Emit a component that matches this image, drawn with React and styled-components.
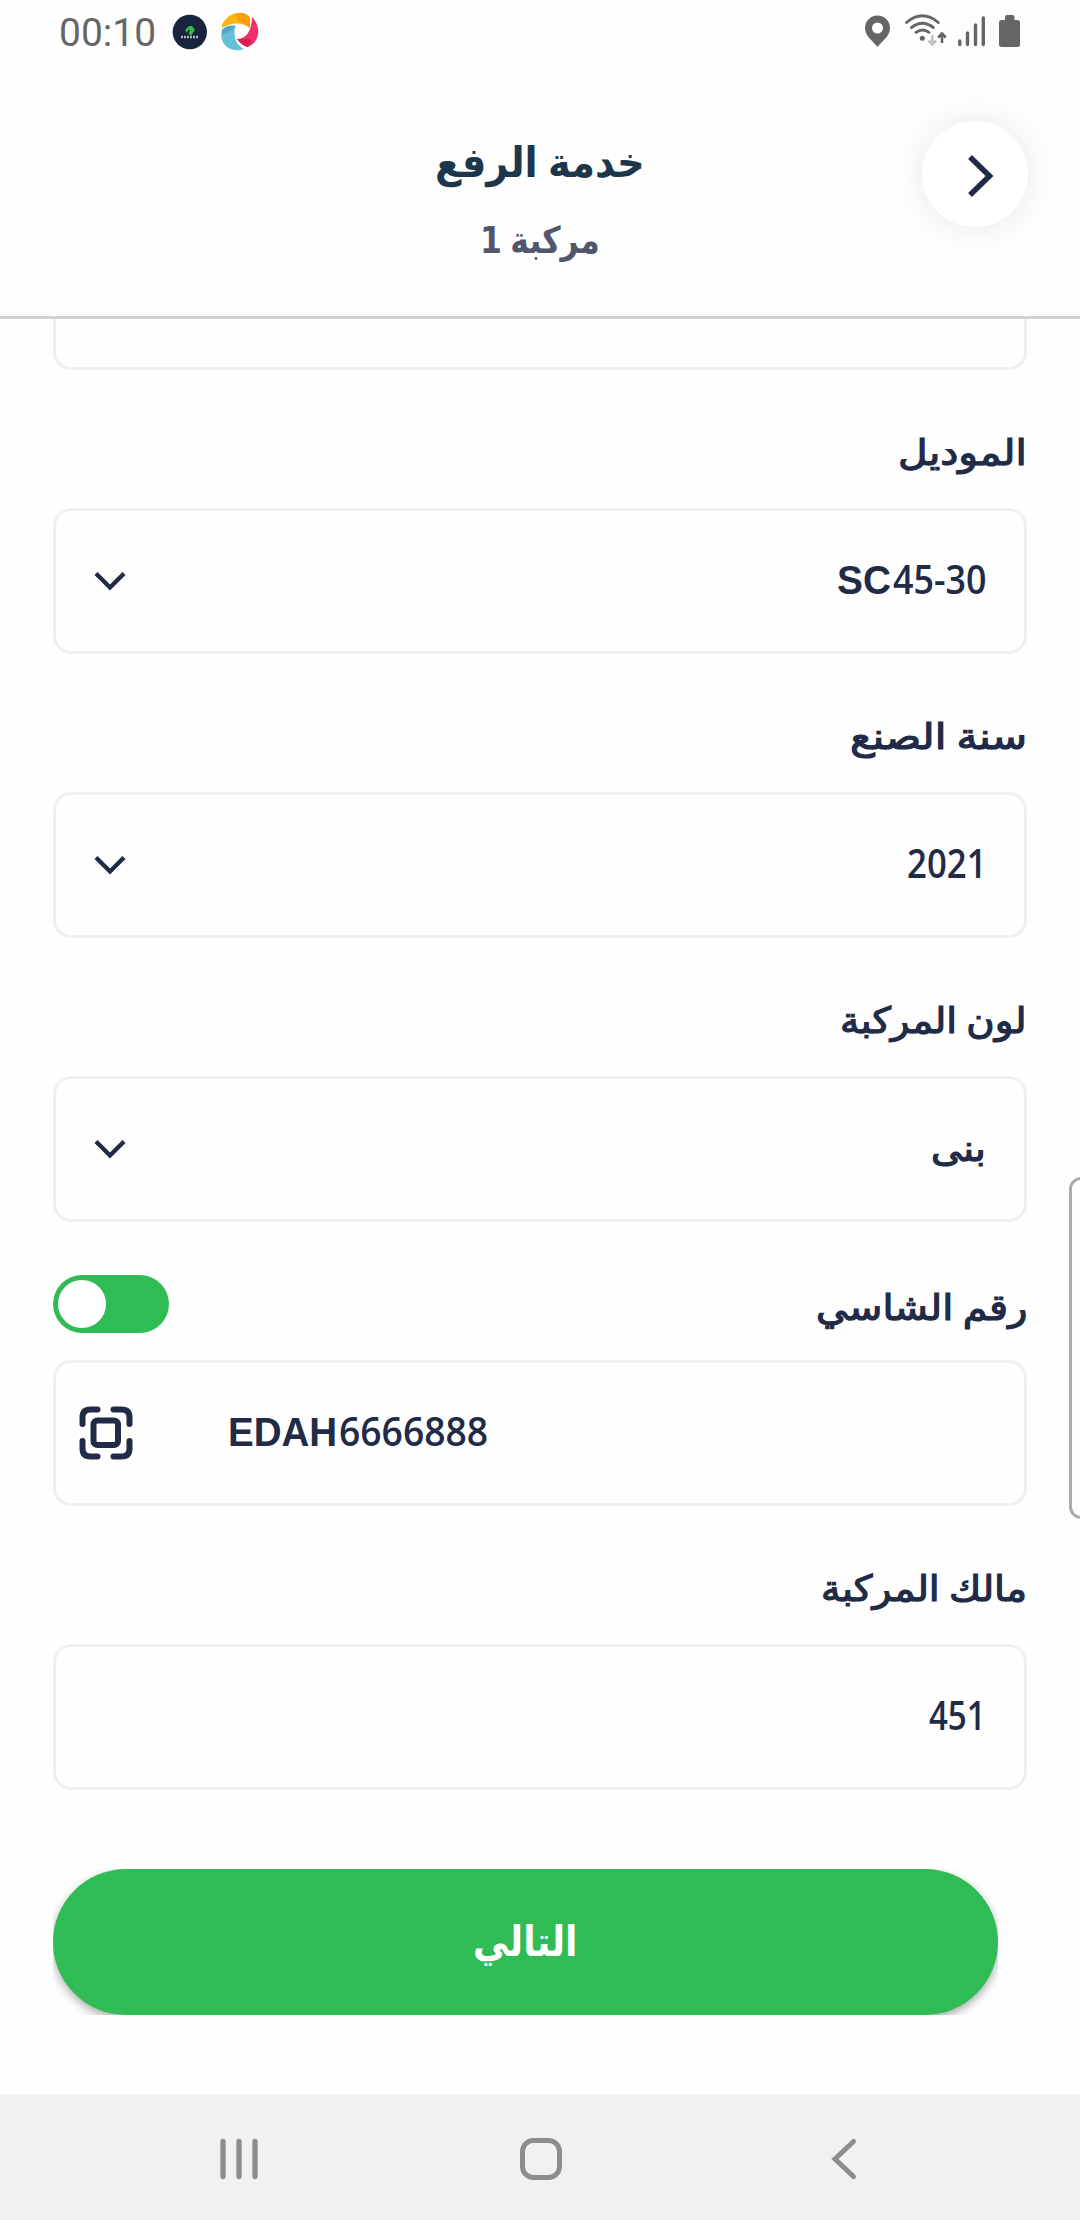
import React, { useLayoutEffect, useRef, useState } from "react";
import styled, { createGlobalStyle } from "styled-components";

const navy = "#212b47";
const green = "#30bc55";
const line = "#efeff4";

const GlobalStyle = createGlobalStyle`
  * { box-sizing: border-box; }
  body { margin: 0; background: #fff; }
`;

const Screen = styled.div`
  width: 1080px;
  height: 2220px;
  display: flex;
  flex-direction: column;
  position: relative;
  overflow: hidden;
  background: #fefefe;
  color: ${navy};
  font-family: "DejaVu Sans", "Noto Sans", sans-serif;
`;

const StatusBar = styled.header`
  height: 66px;
  flex: none;
  display: flex;
  justify-content: space-between;
  padding: 0 57px 0 59px;
`;

const StatusGroup = styled.div`
  display: flex;
  height: 66px;
`;

const Clock = styled.span`
  width: 112px;
  font: 400 39px/67px Roboto, sans-serif;
  color: #666;
`;

const Header = styled.div`
  height: 253px;
  flex: none;
  display: grid;
  grid-template-columns: 158px 1fr 158px;
  border-bottom: 3px solid #d3d3d3;
`;

const HeaderText = styled.div`
  grid-column: 2;
  display: flex;
  flex-direction: column;
  align-items: center;
  padding-top: 62px;
`;

const BackButton = styled.button`
  width: 106px;
  height: 106px;
  margin-top: 55px;
  padding: 0;
  border: 0;
  border-radius: 50%;
  background: #fff;
  box-shadow: 0 0 36px rgba(0, 0, 0, 0.09);
`;

const Form = styled.main`
  flex: none;
  height: 1471px;
  padding: 0 53px;
  overflow: hidden;
`;

const ClippedField = styled.div`
  height: 51px;
  border: 3px solid ${line};
  border-top: 0;
  border-radius: 0 0 18px 18px;
`;

const LabelRow = styled.div`
  height: 138px;
  display: flex;
  justify-content: space-between;
  flex-direction: row-reverse;
  padding: ${(p) => (p.$low ? "48px" : "45px")} 0 0 0;
`;

const Field = styled.div`
  height: 146px;
  border: 3px solid ${line};
  border-radius: 18px;
  display: flex;
  flex-direction: row-reverse;
  justify-content: space-between;
  align-items: center;
  padding: 0 38px 0 37px;
`;

const ScanField = styled(Field)`
  flex-direction: row;
  justify-content: flex-start;
  gap: 95px;
  padding: 0 23px;
`;

const ValueGroup = styled.div`
  display: flex;
  direction: ltr;
  gap: 2px;
  height: 75px;
  margin-bottom: ${(p) => (p.$word ? "1px" : "5px")};
`;

const Switch = styled.button`
  width: 116px;
  height: 58px;
  margin-top: 5px;
  padding: 5px;
  border: 0;
  border-radius: 29px;
  background: ${green};
`;

const Knob = styled.span`
  display: block;
  width: 48px;
  height: 48px;
  border-radius: 50%;
  background: #fff;
`;

const ButtonArea = styled.div`
  flex: none;
  height: 304px;
  padding: 79px 82px 0 53px;
`;

const ShadowClip = styled.div`
  height: 146px;
  overflow: hidden;
`;

const NextButton = styled.button`
  width: 100%;
  height: 146px;
  display: flex;
  justify-content: center;
  padding: 38px 0 0;
  border: 0;
  border-radius: 73px;
  background: ${green};
  color: #fff;
  box-shadow: 0 4px 10px rgba(0, 0, 0, 0.32);
`;

const NavBar = styled.nav`
  height: 126px;
  flex: none;
  display: flex;
  align-items: center;
  padding: 4px 0 0 217px;
  background: #f1f1f1;
`;

const NavIcon = styled.svg`
  flex: none;
  margin-right: ${(p) => p.$after || 0}px;
`;

const EdgePanel = styled.div`
  position: absolute;
  left: 1069px;
  top: 1177px;
  width: 24px;
  height: 342px;
  border: 3px solid #acacac;
  border-radius: 14px;
  background: #fefefe;
`;

const Slot = styled.span`
  display: flex;
  justify-content: flex-end;
  width: ${(p) => p.$width}px;
  height: ${(p) => p.$line || 75}px;
`;

const Glyphs = styled.span`
  flex: none;
  direction: ${(p) => (p.$latin ? "ltr" : "rtl")};
  white-space: nowrap;
  word-spacing: -0.08em;
  transform-origin: right center;
  font-family: ${(p) =>
    p.$latin ? p.$family || '"Open Sans", sans-serif' : '"DejaVu Sans", sans-serif'};
  font-size: ${(p) => p.$size}px;
  font-weight: ${(p) => p.$weight || 400};
  line-height: ${(p) => p.$line || 75}px;
  color: ${(p) => p.$color || "inherit"};
  -webkit-text-stroke: ${(p) => p.$stroke || 0}px currentColor;
`;

/* Narrows or widens a run of text so that it fills the given width. */
function FitText({ width, children, ...look }) {
  const ref = useRef(null);
  const [ratio, setRatio] = useState(1);
  useLayoutEffect(() => {
    setRatio(width / ref.current.offsetWidth);
  }, [width, children]);
  const props = Object.fromEntries(Object.entries(look).map(([k, v]) => ["$" + k, v]));
  return (
    <Slot $width={width} $line={look.line}>
      <Glyphs ref={ref} {...props} style={{ transform: `scaleX(${ratio})` }}>
        {children}
      </Glyphs>
    </Slot>
  );
}

const Label = ({ width, children }) => (
  <FitText width={width} size={36} stroke={1.2}>{children}</FitText>
);

const Digits = ({ width, weight = 600, children }) => (
  <FitText latin width={width} size={40} weight={weight}>{children}</FitText>
);

const Letters = ({ width, children }) => (
  <FitText latin family={'"Liberation Sans", sans-serif'} width={width} size={41} weight={700} line={78}>
    {children}
  </FitText>
);

const Chevron = () => (
  <svg width="34" height="22" viewBox="0 0 34 22" fill="none" stroke={navy} strokeWidth="4.4">
    <path d="M3 3.500L17 17.500L31 3.500" />
  </svg>
);

const AppIcons = () => (
  <svg width="92" height="66" viewBox="171 0 92 66">
    <circle cx="189.8" cy="32" r="17.2" fill="#18243c" />
    <path d="M185 30l4-4 3 0 3 4-3 4-2 2-1-3 1-3-2 0-1 3z" fill="#35ba50" />
    <path d="M181 37h17" stroke="#aab3c0" strokeWidth="2.3" strokeDasharray="2 1" />
    <path d="M222 25C228 12 243 9 250 18L250 28C242 22 232 22 222 28Z" fill="#fdb515" />
    <path d="M235 14C242 12 247 13 250 18V28C246 24 242 23 239 22Z" fill="#ff9d08" />
    <path d="M252 17C262 27 260 43 247 47C243 45 240 43 237 39C246 39 252 31 252 17Z" fill="#ec316a" />
    <path d="M237 39L252 39L248 47C243 46 240 43 237 39Z" fill="#d91f4f" />
    <path d="M222 30C218 43 230 54 244 49C237 45 233 39 235 27C230 25 225 26 222 30Z" fill="#63c1da" />
    <path d="M222 30C227 25 232 25 236 26C233 31 226 32 222 35Z" fill="#4fa8c5" />
  </svg>
);

const SystemIcons = () => (
  <svg width="163" height="66" viewBox="860 0 163 66">
    <path
      d="M877.5 15.5c-7 0-12.5 5.500-12.500 12.500c0 8 7 12 12.500 19c5.500-7 12.500-11 12.500-19c0-7-5.500-12.500-12.500-12.500zm0 7a5.500 5.500 0 1 1 0 11a5.500 5.500 0 1 1 0-11z"
      fill="#666"
      fillRule="evenodd"
    />
    <g fill="none" stroke="#666" strokeWidth="2.900" strokeLinecap="round">
      <path d="M906.5 22.500q15.800-13.500 31.800 0" />
      <path d="M911.5 27.500q10.900-8.500 21.800 0" />
      <path d="M916 32.300q6.500-4.800 13 0" />
    </g>
    <circle cx="922.300" cy="38.300" r="2.500" fill="#666" />
    <path d="M932.300 35v9M928.500 40.500l3.800 4l3.800-4" fill="none" stroke="#c4c4c4" strokeWidth="2.600" />
    <path d="M942 43V34M938.200 37.500l3.800-4l3.800 4" fill="none" stroke="#666" strokeWidth="2.600" />
    <g stroke="#666" strokeWidth="3.400" strokeLinecap="round">
      <path d="M959.800 41v3.500M967.500 33v11.500M975.500 25v19.500M983.300 18v26.500" />
    </g>
    <path d="M1005 17q0-2 2-2h5.500q2 0 2 2v3h3q2.500 0 2.500 2.500v22q0 2.500-2.500 2.500h-16q-2.500 0-2.500-2.500v-22q0-2.500 2.500-2.500h3.500z" fill="#666" />
  </svg>
);

const ScanIcon = () => (
  <svg width="54" height="54" viewBox="0 0 54 54" fill="none" stroke={navy} strokeWidth="6" strokeLinecap="round">
    <path d="M3.500 18V11.500Q3.500 3.500 11.500 3.500H18.500M34.500 3.500H42.500Q50.500 3.500 50.500 11.500V18M50.500 35V42.500Q50.500 50.500 42.500 50.500H34.500M18.500 50.500H11.500Q3.500 50.500 3.500 42.500V35" />
    <rect x="14.500" y="14.500" width="24.500" height="24.500" rx="4" />
  </svg>
);

function SelectField({ label, labelWidth, word, children }) {
  return (
    <>
      <LabelRow>
        <Label width={labelWidth}>{label}</Label>
      </LabelRow>
      <Field>
        <ValueGroup $word={word}>{children}</ValueGroup>
        <Chevron />
      </Field>
    </>
  );
}

export default function App() {
  return (
    <Screen>
      <GlobalStyle />
      <StatusBar>
        <StatusGroup>
          <Clock>00:10</Clock>
          <AppIcons />
        </StatusGroup>
        <StatusGroup>
          <SystemIcons />
        </StatusGroup>
      </StatusBar>
      <Header>
        <HeaderText>
          <FitText width={210} size={42} weight={700} color="#1c374c" line={70}>خدمة الرفع</FitText>
          <FitText width={120} size={37} weight={700} color="#52566d" line={85}>مركبة 1</FitText>
        </HeaderText>
        <BackButton aria-label="رجوع">
          <svg width="106" height="106" viewBox="0 0 106 106" fill="none" stroke={navy} strokeWidth="5.500">
            <path d="M48 36L67.500 55L48 74" />
          </svg>
        </BackButton>
      </Header>
      <Form>
        <ClippedField />
        <SelectField label="الموديل" labelWidth={129}>
          <Letters width={54}>SC</Letters>
          <Digits width={93}>45-30</Digits>
        </SelectField>
        <SelectField label="سنة الصنع" labelWidth={177}>
          <Digits width={79}>2021</Digits>
        </SelectField>
        <SelectField label="لون المركبة" labelWidth={187} word>
          <Label width={55}>بنى</Label>
        </SelectField>
        <LabelRow $low>
          <Label width={211}>رقم الشاسي</Label>
          <Switch role="switch" aria-checked="true" aria-label="رقم الشاسي">
            <Knob />
          </Switch>
        </LabelRow>
        <ScanField>
          <ScanIcon />
          <ValueGroup>
            <Letters width={109}>EDAH</Letters>
            <Digits width={149}>6666888</Digits>
          </ValueGroup>
        </ScanField>
        <LabelRow>
          <Label width={206}>مالك المركبة</Label>
        </LabelRow>
        <Field>
          <ValueGroup>
            <Digits width={57}>451</Digits>
          </ValueGroup>
        </Field>
      </Form>
      <ButtonArea>
        <ShadowClip>
          <NextButton>
            <FitText width={104} size={42} weight={700} line={70}>التالي</FitText>
          </NextButton>
        </ShadowClip>
      </ButtonArea>
      <NavBar>
        <NavIcon $after={257} width="44" height="46" viewBox="0 0 44 46" stroke="#8d8d8d" strokeWidth="5.300" strokeLinecap="round">
          <path d="M6 5.500v35M22 5.500v35M38 5.500v35" />
        </NavIcon>
        <NavIcon $after={265} width="46" height="46" viewBox="0 0 46 46" fill="none" stroke="#8d8d8d" strokeWidth="5">
          <rect x="4.500" y="4.500" width="37" height="37" rx="11" />
        </NavIcon>
        <NavIcon width="30" height="46" viewBox="0 0 30 46" fill="none" stroke="#8d8d8d" strokeWidth="5" strokeLinecap="round">
          <path d="M24.500 5.500L6 23L24.500 40.500" />
        </NavIcon>
      </NavBar>
      <EdgePanel />
    </Screen>
  );
}
